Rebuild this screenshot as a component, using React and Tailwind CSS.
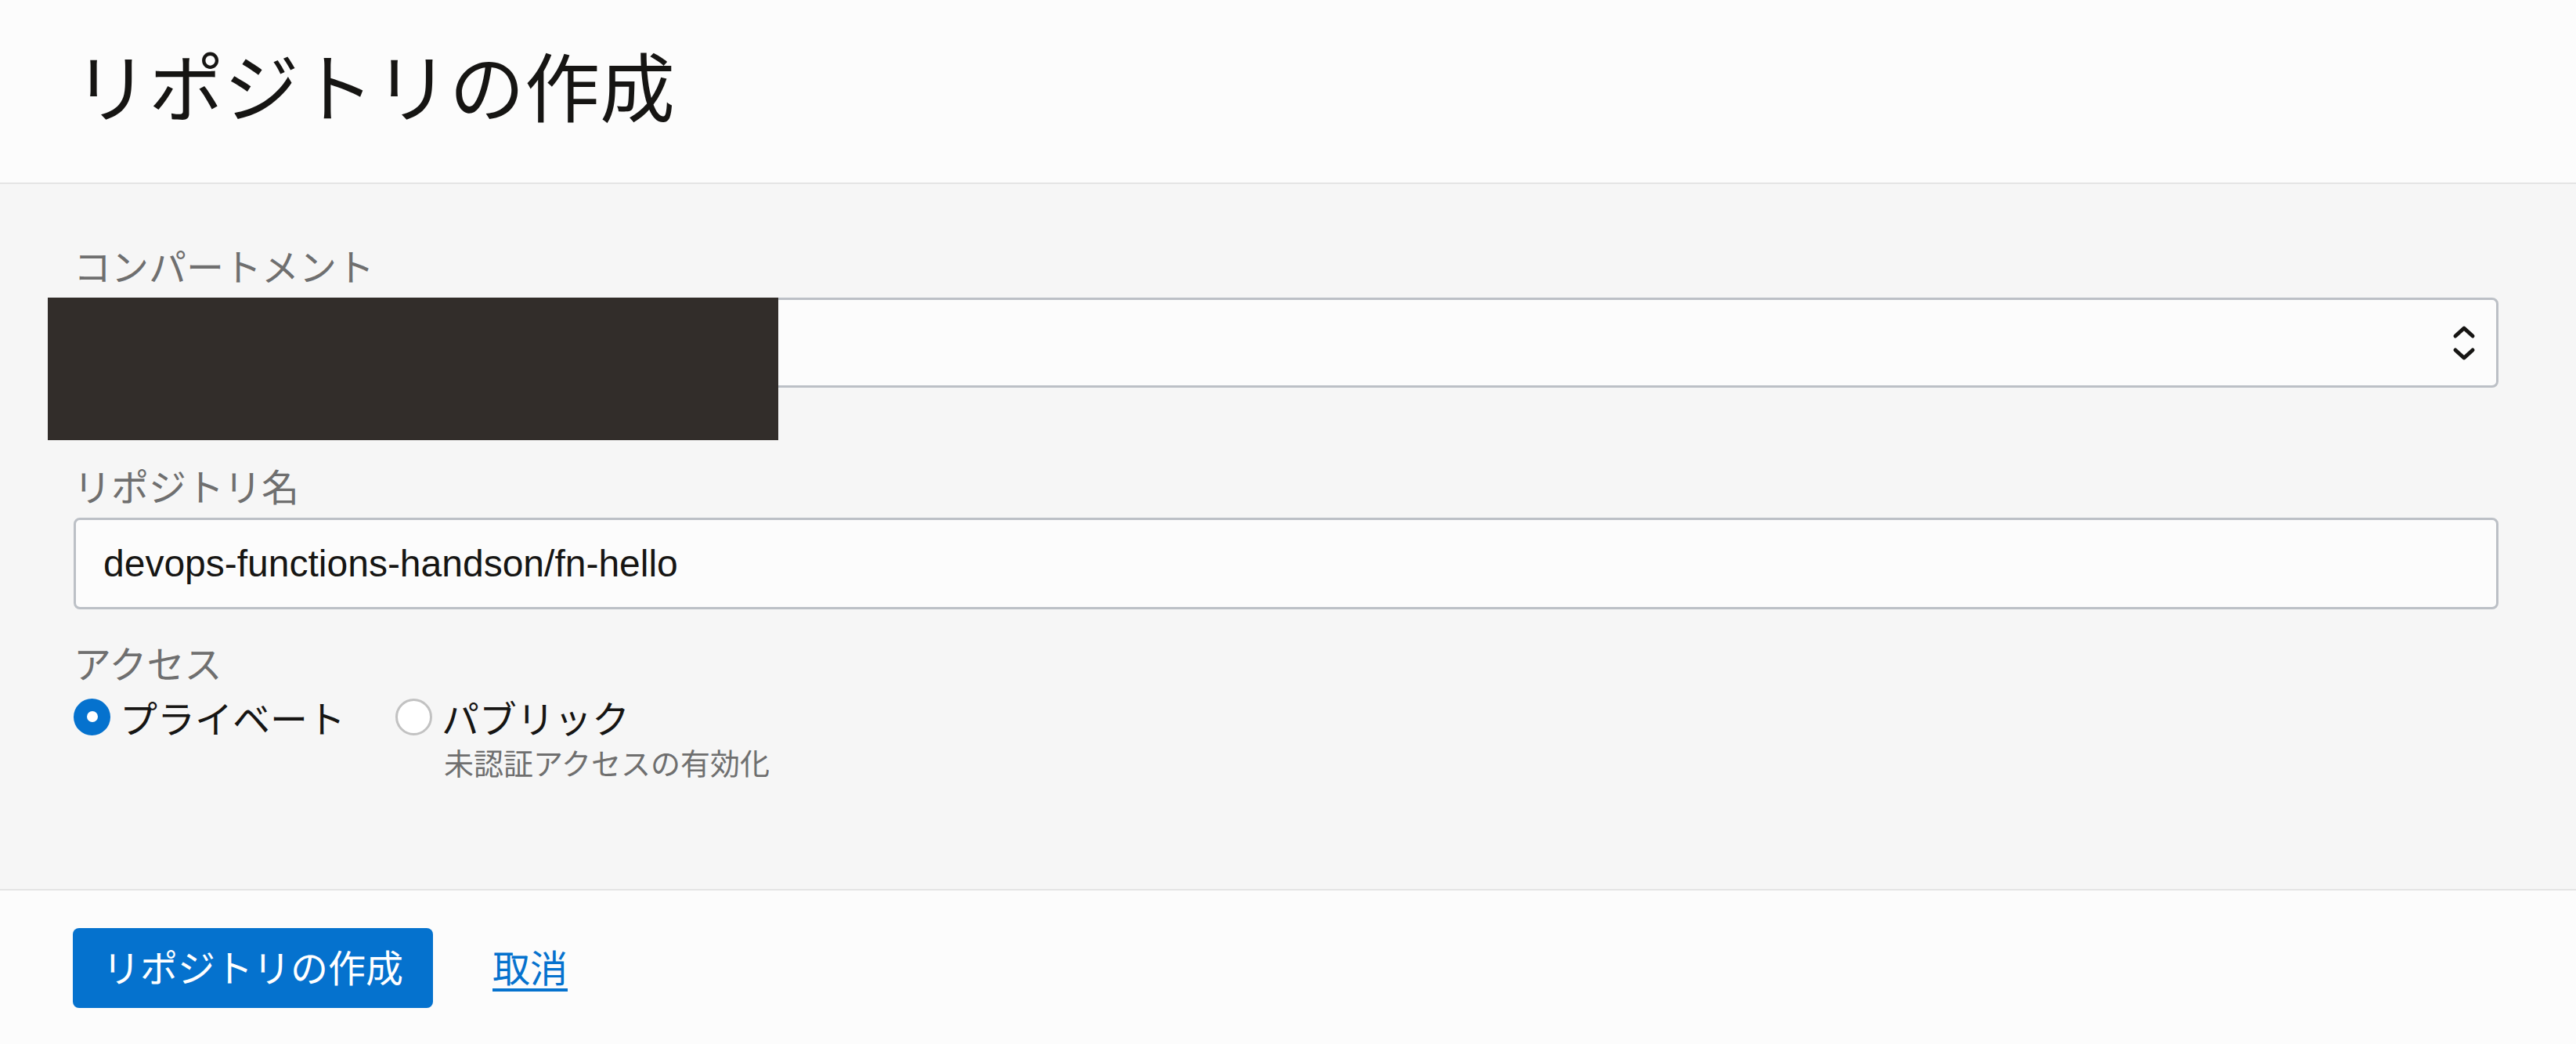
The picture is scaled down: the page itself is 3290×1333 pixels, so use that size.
import React from "react";

const jp = { fontFamily: '"Noto Sans CJK JP", "Noto Sans", sans-serif' };
const latin = { fontFamily: '"Liberation Sans", Arial, "Noto Sans CJK JP", sans-serif' };

function Chevrons() {
  return (
    <svg width="30" height="46" viewBox="0 0 30 46" fill="none" stroke="#161513" strokeWidth="5" strokeLinecap="round" strokeLinejoin="round">
      <path d="M4 14 L15 4 L26 14" />
      <path d="M4 32 L15 42 L26 32" />
    </svg>
  );
}

export default function App() {
  return (
    <div className="relative w-[3290px] h-[1333px] bg-[#f5f5f5] flex flex-col overflow-hidden" style={jp}>
      {/* Header */}
      <div className="h-[235px] shrink-0 bg-[#fcfcfc] border-b-2 border-[#e4e4e4] flex items-center pl-[94px]">
        <h1 className="text-[96px] leading-none font-normal text-[#161513] -mt-[20px]">リポジトリの作成</h1>
      </div>

      {/* Body */}
      <div className="flex-1 bg-[#f6f6f6] pl-[94px] pr-[99px] pt-[74px] flex flex-col border-b-2 border-[#e4e4e4]">
        <div className="text-[48px] leading-[58px] text-[#6f6f6f] mb-[13px]">コンパートメント</div>
        <div className="h-[115px] rounded-[8px] border-[3px] border-[#bcc0c6] bg-[#fcfcfc] flex items-center justify-end pr-[26px]">
          <Chevrons />
        </div>

        <div className="text-[48px] leading-[58px] text-[#6f6f6f] mt-[95px] mb-[13px]">リポジトリ名</div>
        <div className="h-[117px] rounded-[8px] border-[3px] border-[#bcc0c6] bg-[#fcfcfc] flex items-center pl-[35px]">
          <span className="text-[48px] text-[#161513]" style={latin}>devops-functions-handson/fn-hello</span>
        </div>

        <div className="text-[48px] leading-[58px] text-[#6f6f6f] mt-[38px]">アクセス</div>
        <div className="flex items-start gap-[64px] mt-[12px]">
          <div className="flex items-center h-[58px]">
            <span className="w-[47px] h-[47px] rounded-full bg-[#0572ce] flex items-center justify-center">
              <span className="w-[14px] h-[14px] rounded-full bg-white" />
            </span>
            <span className="text-[48px] leading-[58px] text-[#161513] ml-[12px]">プライベート</span>
          </div>
          <div className="flex flex-col">
            <div className="flex items-center h-[58px]">
              <span className="w-[47px] h-[47px] rounded-full bg-white border-[3px] border-[#c2c2c2]" />
              <span className="text-[48px] leading-[58px] text-[#161513] ml-[12px]">パブリック</span>
            </div>
            <div className="text-[38px] leading-[46px] text-[#6f6f6f] mt-[6px] ml-[62px]">未認証アクセスの有効化</div>
          </div>
        </div>
      </div>

      {/* Footer */}
      <div className="h-[196px] shrink-0 bg-[#fcfcfc] pl-[93px] pt-[48px] flex items-start gap-[76px]">
        <button className="h-[102px] px-[38px] rounded-[8px] bg-[#0572ce] text-white text-[48px] leading-none flex items-center pb-[6px]" style={jp}>
          リポジトリの作成
        </button>
        <a className="h-[102px] flex items-center text-[48px] text-[#0572ce] underline underline-offset-[8px] pb-[6px]" href="#" onClick={(e) => e.preventDefault()}>
          取消
        </a>
      </div>

      {/* Redaction overlay */}
      <div className="absolute left-[61px] top-[380px] w-[933px] h-[182px] bg-[#322d2a]" />
    </div>
  );
}
